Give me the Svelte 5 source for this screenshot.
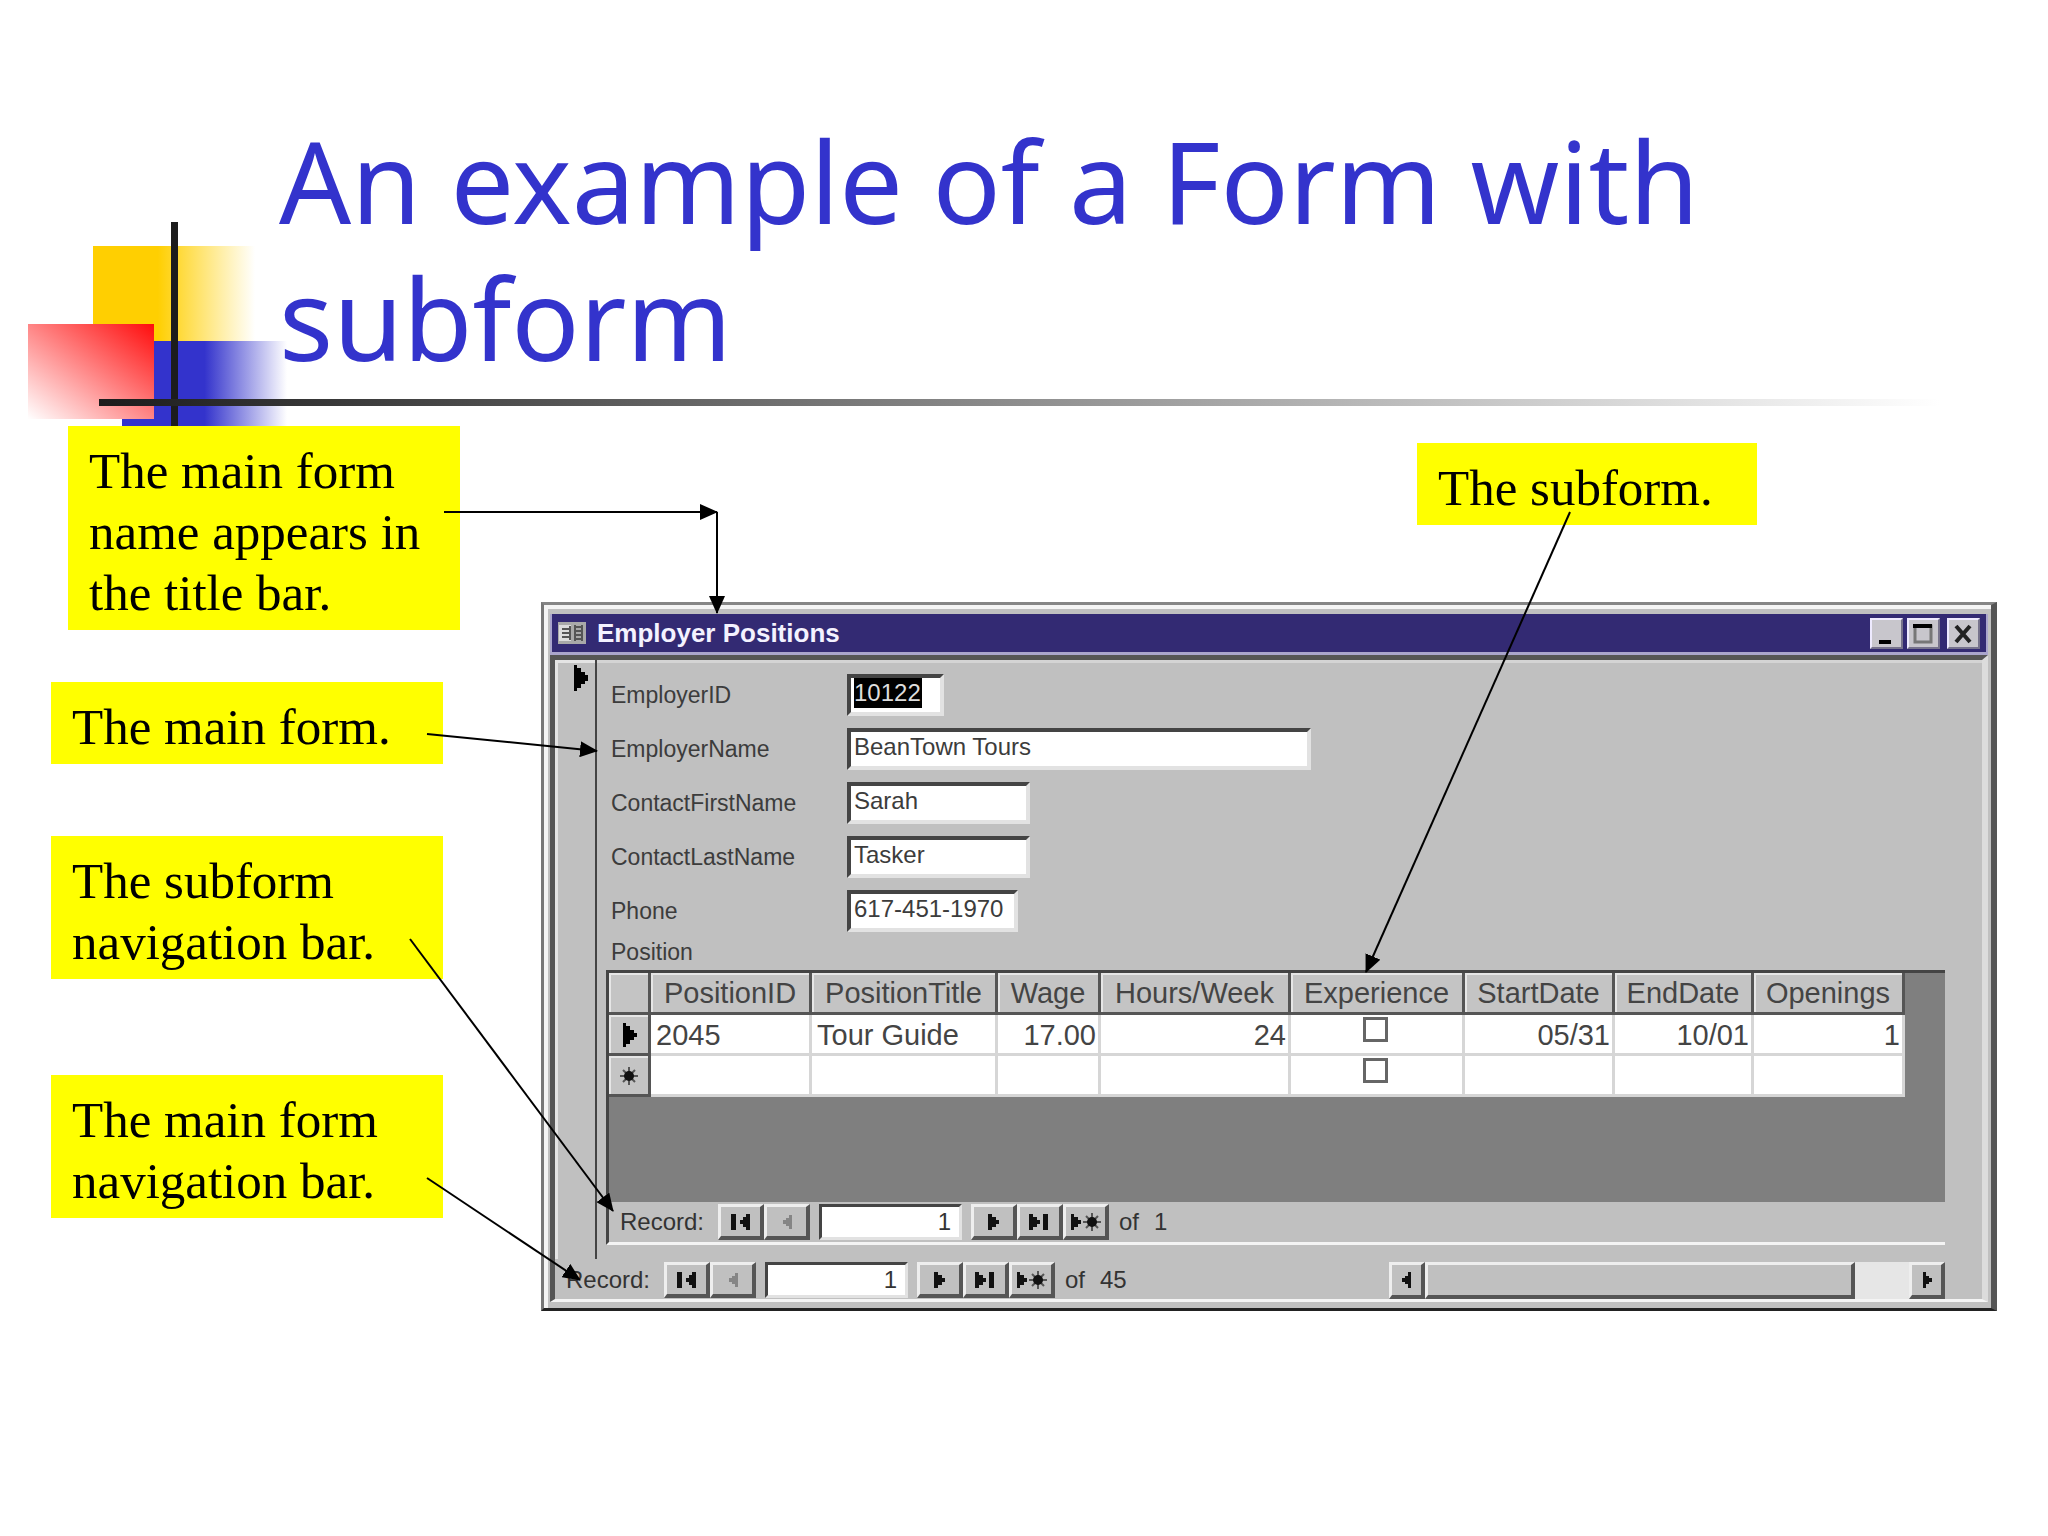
<script lang="ts">
    const fields = [
        { id: 'employer-id', label: 'EmployerID', value: '10122', size: 'tiny', selected: true },
        { id: 'employer-name', label: 'EmployerName', value: 'BeanTown Tours', size: 'wide' },
        { id: 'contact-first', label: 'ContactFirstName', value: 'Sarah', size: 'medium' },
        { id: 'contact-last', label: 'ContactLastName', value: 'Tasker', size: 'medium' },
        { id: 'phone', label: 'Phone', value: '617-451-1970', size: 'small' },
    ];

    const columns = [
        { name: 'PositionID', width: 161 },
        { name: 'PositionTitle', width: 186 },
        { name: 'Wage', width: 103 },
        { name: 'Hours/Week', width: 190 },
        { name: 'Experience', width: 174 },
        { name: 'StartDate', width: 150 },
        { name: 'EndDate', width: 139 },
        { name: 'Openings', width: 151 },
    ];

    const rows = [
        { marker: 'current', cells: ['2045', 'Tour Guide', '17.00', '24', false, '05/31', '10/01', '1'] },
        { marker: 'new', cells: ['', '', '', '', false, '', '', ''] },
    ];
</script>

{#snippet star()}
    <path d="M0 -9V9M-9 0H9M-6 -6L6 6M-6 6L6 -6" fill="none" stroke="#555" stroke-width="2" />
    <circle r="5" fill="#111" />
{/snippet}

{#snippet recordNav(name, total)}
    <div class="nav">
        <label for={name}>Record:</label>
        <div class="group first">
            <button class="bevel" aria-label="First record">
                <svg width="26" height="18"><path d="M3 1h5v16H3zM22 1v16h-4v-3h-3v-3h-3V7h3V4h3V1z" fill="#111" /></svg>
            </button>
            <button class="bevel" aria-label="Previous record">
                <svg width="26" height="18"><path d="M18 2v14h-3v-3h-3v-2H9V7h3V5h3V2z" fill="#858585" /></svg>
            </button>
        </div>
        <input id={name} value="1" />
        <div class="group">
            <button class="bevel" aria-label="Next record">
                <svg width="26" height="18"><path d="M7 1v16h4v-3h4v-3h3V7h-3V4h-4V1z" fill="#111" /></svg>
            </button>
            <button class="bevel" aria-label="Last record">
                <svg width="26" height="18"><path d="M2 1v16h4v-3h4v-3h3V7h-3V4H6V1zM16 1h5v16h-5z" fill="#111" /></svg>
            </button>
            <button class="bevel" aria-label="New record">
                <svg width="34" height="20"><path d="M2 2v16h3v-3h4v-3h3V8H9V5H5V2z" fill="#111" /><g transform="translate(23 10)">{@render star()}</g></svg>
            </button>
        </div>
        <span class="total"><span>of</span><span>{total}</span></span>
    </div>
{/snippet}

<div class="slide">
    <svg class="ornament" width="300" height="250" viewBox="0 200 300 250" aria-hidden="true">
        <defs>
            <linearGradient id="gold"><stop offset=".4" stop-color="#ffcf01" /><stop offset="1" stop-color="#fff" /></linearGradient>
            <linearGradient id="blue"><stop offset=".5" stop-color="#3333cc" /><stop offset="1" stop-color="#fff" /></linearGradient>
            <linearGradient id="red" x1="1" y1="0" x2="0" y2="1"><stop offset="0" stop-color="#ff0c0c" /><stop offset="1" stop-color="#fff" /></linearGradient>
        </defs>
        <rect x="93" y="246" width="162" height="95" fill="url(#gold)" />
        <rect x="122" y="341" width="165" height="95" fill="url(#blue)" />
        <rect x="28" y="324" width="126" height="95" fill="url(#red)" />
        <rect x="171" y="222" width="7" height="214" fill="#1c1c1c" />
    </svg>

    <header>
        <h1>An example of a Form with subform</h1>
    </header>
    <hr />

    <main>
        <div class="notes">
            <p class="note title-note">The main form name appears in the title bar.</p>
            <p class="note form-note">The main form.</p>
            <p class="note subnav-note">The subform navigation bar.</p>
            <p class="note nav-note">The main form navigation bar.</p>
        </div>

        <div class="stage">
            <p class="note subform-note">The subform.</p>

            <section class="window">
                <div class="titlebar">
                    <svg width="28" height="22" aria-hidden="true">
                        <rect width="28" height="22" fill="#a9a9a9" />
                        <path d="M1 3h12v16H1z" fill="#dcdcdc" />
                        <path d="M4 7h7M4 11h9M4 15h7M16 5h9M16 9h9M16 13h9M16 17h9M17 3v16M24 3v16M12 4v14" stroke="#555" stroke-width="2" />
                    </svg>
                    <h2>Employer Positions</h2>
                    <div class="controls">
                        <button aria-label="Minimize"><svg width="32" height="32"><path d="M9 22h12v4H9z" fill="#000" /></svg></button>
                        <button aria-label="Maximize"><svg width="32" height="32"><path d="M8 8h16v16H8z" fill="none" stroke="#777" stroke-width="3" /><path d="M6 6h19v4H6z" fill="#000" /></svg></button>
                        <button class="close" aria-label="Close"><svg width="32" height="32"><path d="M9 8l14 16M23 8L9 24" stroke="#222" stroke-width="4" /></svg></button>
                    </div>
                </div>

                <div class="client">
                    <div class="record">
                        <div class="selector">
                            <svg width="16" height="26"><path d="M1 0v26h3v-3h4v-4h4v-3h3v-6h-3V7H8V3H4V0z" fill="#000" /></svg>
                        </div>
                        <div class="form">
                            <div class="fields">
                                {#each fields as field}
                                    <label for={field.id}>{field.label}</label>
                                    <div class="box {field.size}">
                                        <input class:selected={field.selected} id={field.id} value={field.value} />
                                    </div>
                                {/each}
                            </div>

                            <h3>Position</h3>
                            <div class="subform">
                                <div class="sheet">
                                    <table>
                                        <colgroup>
                                            <col style="width: 42px" />
                                            {#each columns as column}
                                                <col style="width: {column.width}px" />
                                            {/each}
                                        </colgroup>
                                        <thead>
                                            <tr>
                                                <th aria-label="Row"></th>
                                                {#each columns as column}
                                                    <th>{column.name}</th>
                                                {/each}
                                            </tr>
                                        </thead>
                                        <tbody>
                                            {#each rows as row}
                                                <tr>
                                                    <th>
                                                        <svg width="22" height="26">
                                                            {#if row.marker === 'current'}
                                                                <path d="M5 1v24h3v-3h4v-4h4v-3h3v-4h-3V8h-4V4H8V1z" fill="#000" />
                                                            {:else}
                                                                <g transform="translate(11 13)">{@render star()}</g>
                                                            {/if}
                                                        </svg>
                                                    </th>
                                                    {#each row.cells as cell, i}
                                                        {#if typeof cell === 'boolean'}
                                                            <td class="check"><input type="checkbox" checked={cell} aria-label="Experience" /></td>
                                                        {:else}
                                                            <td class:number={i > 1}>{cell}</td>
                                                        {/if}
                                                    {/each}
                                                </tr>
                                            {/each}
                                        </tbody>
                                    </table>
                                </div>
                                {@render recordNav('subform-record', 1)}
                            </div>
                        </div>
                    </div>

                    <div class="footer">
                        {@render recordNav('main-record', 45)}
                        <div class="scrollbar">
                            <button class="bevel" aria-label="Scroll left"><svg width="14" height="18"><path d="M11 1v16H8v-4H5v-2H2V7h3V5h3V1z" fill="#111" /></svg></button>
                            <div class="thumb bevel"></div>
                            <div class="track"></div>
                            <button class="bevel" aria-label="Scroll right"><svg width="14" height="18"><path d="M3 1v16h3v-4h3v-2h3V7H9V5H6V1z" fill="#111" /></svg></button>
                        </div>
                    </div>
                </div>
            </section>
        </div>
    </main>

    <svg class="arrows" aria-hidden="true">
        <defs>
            <marker id="head" markerUnits="userSpaceOnUse" markerWidth="18" markerHeight="16" refX="17" refY="8" orient="auto">
                <path d="M0 0L18 8L0 16z" />
            </marker>
        </defs>
        <line x1="444" y1="512" x2="717" y2="512" />
        <line x1="717" y1="512" x2="717" y2="613" />
        <line x1="427" y1="734" x2="597" y2="751" />
        <line x1="410" y1="939" x2="613" y2="1211" />
        <line x1="427" y1="1178" x2="580" y2="1280" />
        <line x1="1570" y1="512" x2="1366" y2="972" />
    </svg>
</div>

<style>
    :global(body) {
        margin: 0;
        background: #fff;
    }

    .slide {
        position: relative;
        min-height: 100vh;
        font-family: "Liberation Sans", Arial, sans-serif;
        color: #333;
    }

    .ornament {
        position: absolute;
        top: 200px;
        left: 0;
    }

    header {
        position: relative;
        padding: 112px 240px 13px 279px;
    }

    h1 {
        margin: 0;
        font: 400 113px/137px "Noto Sans", "Open Sans", sans-serif;
        color: #3333cc;
    }

    hr {
        position: relative;
        height: 7px;
        margin: 0 108px 0 99px;
        border: none;
        background: linear-gradient(to right, #1c1c1c, #fff);
    }

    main {
        position: relative;
        display: grid;
        grid-template-columns: 541px 1fr;
        padding-right: 51px;
    }

    .notes, .stage {
        display: flex;
        flex-direction: column;
    }

    .note {
        box-sizing: border-box;
        width: 392px;
        margin: 0 0 0 51px;
        padding: 15px 21px 6px;
        background: #ffff00;
        font: 51px/61px "Liberation Serif", "Times New Roman", serif;
        color: #000;
    }

    .title-note {
        margin: 20px 0 0 68px;
    }

    .form-note {
        margin-top: 52px;
    }

    .subnav-note {
        margin-top: 72px;
    }

    .nav-note {
        margin-top: 96px;
    }

    .subform-note {
        align-self: flex-end;
        width: 340px;
        margin: 37px 240px 77px 0;
    }

    .window {
        padding: 9px 3px 6px 6px;
        border: solid;
        border-width: 3px 6px 3px 3px;
        border-color: #858585 #555 #222 #777;
        background: #c0c0c0;
        box-shadow: inset 4px 4px #f4f4f4;
    }

    .titlebar {
        display: flex;
        align-items: center;
        height: 38px;
        padding: 0 6px;
        border: solid #aaa5cc;
        border-width: 0 2px 3px;
        background: #332a73;
    }

    .titlebar > svg {
        margin-right: 11px;
    }

    h2 {
        flex: 1;
        margin: 0;
        font-size: 26px;
        line-height: 36px;
        color: #f4f2ff;
    }

    .controls {
        display: flex;
        gap: 4px;
    }

    .controls button {
        display: flex;
        width: 33px;
        height: 31px;
        padding: 0;
        border: solid;
        border-width: 2px;
        border-color: #eeeaff #77738c #77738c #eeeaff;
        background: #c8c6cc;
    }

    .controls button svg {
        margin: -2px;
    }

    .controls .close {
        margin-left: 3px;
    }

    .client {
        border: solid;
        border-width: 5px 6px 3px 5px;
        border-color: #555 #dcdcdc #f4f4f4 #555;
    }

    .record {
        display: flex;
    }

    .selector {
        width: 42px;
        box-sizing: border-box;
        padding: 5px 0 0 18px;
        border-right: 2px solid #444;
        box-shadow: inset 3px 3px #e4e4e4;
    }

    .form {
        flex: 1;
        padding: 14px 37px 14px 9px;
        box-shadow: inset 0 3px #d4d4d4;
    }

    .fields {
        display: grid;
        grid-template-columns: 236px 1fr;
        gap: 12px 0;
        align-items: center;
        padding-left: 5px;
    }

    .fields, h3 {
        font-size: 23px;
        font-weight: 400;
        line-height: 40px;
        color: #3c3c3c;
    }

    h3 {
        height: 38px;
        margin: 0;
        padding-left: 5px;
    }

    .box {
        box-sizing: border-box;
        height: 42px;
        padding: 0 3px;
        border: solid;
        border-width: 4px;
        border-color: #444 #e2e2e2 #e2e2e2 #444;
        background: #fff;
    }

    .box input {
        display: block;
        width: 100%;
        height: 30px;
        padding: 0;
        border: none;
        background: none;
        font: 24px/30px "Liberation Sans", Arial, sans-serif;
        color: inherit;
    }

    .box .selected {
        width: 68px;
        background: #000;
        color: #ddd;
    }

    .tiny {
        width: 97px;
    }

    .wide {
        width: 464px;
    }

    .medium {
        width: 183px;
    }

    .small {
        width: 171px;
    }

    .subform {
        border: solid;
        border-width: 3px 0 3px 3px;
        border-color: #444 #c0c0c0 #f4f4f4 #444;
    }

    .sheet {
        padding-bottom: 105px;
        background: #7f7f7f;
    }

    table {
        table-layout: fixed;
        width: 1296px;
        border-spacing: 0;
        font-size: 29px;
        line-height: 36px;
        color: #444;
    }

    th {
        height: 38px;
        padding: 1px 0 0;
        border-right: 3px solid #555;
        border-bottom: 3px solid #555;
        background: #c4c4c4;
        box-shadow: inset 2px 2px #e6e6e6;
        font-weight: 400;
    }

    tbody th {
        height: 37px;
    }

    th svg {
        display: block;
        margin: 0 auto;
    }

    td {
        padding: 2px 2px 0 5px;
        border-right: 3px solid #d6d6d6;
        border-bottom: 3px solid #d6d6d6;
        background: #fff;
    }

    .number {
        text-align: right;
    }

    .check {
        vertical-align: top;
    }

    .check input {
        appearance: none;
        display: block;
        box-sizing: border-box;
        width: 25px;
        height: 25px;
        margin: 0 0 0 67px;
        border: 3px solid #666;
        background: #fff;
    }

    .nav {
        display: flex;
        align-items: center;
        height: 40px;
        padding-left: 11px;
        font-size: 24px;
        line-height: 36px;
    }

    .nav label {
        width: 98px;
    }

    .group {
        display: flex;
    }

    .bevel {
        display: flex;
        align-items: center;
        justify-content: center;
        box-sizing: border-box;
        width: 46px;
        height: 36px;
        padding: 0;
        border: solid;
        border-width: 3px 4px 4px 3px;
        border-color: #eee #555 #555 #eee;
        background: #c0c0c0;
    }

    .nav input {
        box-sizing: border-box;
        width: 143px;
        height: 36px;
        margin: 0 9px;
        padding: 0 8px;
        border: solid;
        border-width: 3px;
        border-color: #444 #e2e2e2 #e2e2e2 #444;
        background: #fff;
        font: inherit;
        color: inherit;
        text-align: right;
    }

    .total {
        display: flex;
        gap: 15px;
        margin-left: 10px;
    }

    .footer {
        display: flex;
        justify-content: space-between;
        padding: 2px 37px 0 0;
    }

    .footer .nav {
        height: 38px;
    }

    .scrollbar {
        display: flex;
        align-items: center;
        width: 556px;
    }

    .scrollbar .bevel {
        width: 36px;
        height: 37px;
    }

    .scrollbar .thumb {
        flex: 1;
    }

    .track {
        width: 54px;
        height: 37px;
        background: #e6e6e6;
    }

    .arrows {
        position: absolute;
        top: 0;
        left: 0;
        width: 100%;
        height: 100%;
        pointer-events: none;
    }

    .arrows line {
        stroke: #000;
        stroke-width: 2px;
        marker-end: url(#head);
    }
</style>
